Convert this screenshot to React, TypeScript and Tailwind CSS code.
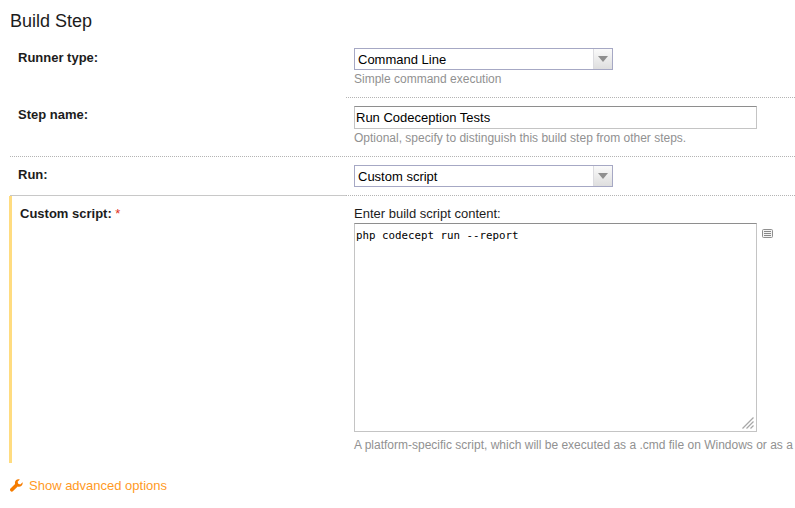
import type { ReactNode } from 'react';

const font = "font-['Liberation_Sans',Arial,sans-serif]";

function FakeSelect({ value }: { value: string }) {
  return (
    <div className="flex h-[22px] w-[259px] border border-[#a6a8c4] bg-white">
      <div className="flex-1 pl-[3px] text-[13px] leading-[21px] text-black">{value}</div>
      <div className="flex w-[19px] items-center justify-center border-l border-[#dcdce0] bg-gradient-to-b from-[#fafafa] to-[#dedede]">
        <svg width="10" height="6" viewBox="0 0 10 6">
          <path d="M0 0h10L5 6z" fill="#8f8f8f" />
        </svg>
      </div>
    </div>
  );
}

function Note({ children }: { children: ReactNode }) {
  return <div className="whitespace-nowrap text-[12px] leading-[14px] text-[#919191]">{children}</div>;
}

function Label({ children }: { children: ReactNode }) {
  return <div className="text-[13px] font-bold leading-[15px] text-[#1c1c1c]">{children}</div>;
}

export default function App() {
  return (
    <div className={`${font} h-[508px] w-[795px] overflow-hidden bg-white`}>
      <h1 className="h-10 pl-[10px] pt-[10px] text-[18px] font-normal leading-[22px] text-[#1c1c1c]">Build Step</h1>

      <div className="ml-[10px]">
        {/* Runner type */}
        <div className="flex h-[58px]">
          <div className="w-[336px] pl-2 pt-[10px]">
            <Label>Runner type:</Label>
          </div>
          <div className="flex-1 border-b border-dotted border-[#b4b4b4] pl-2 pt-2">
            <FakeSelect value="Command Line" />
            <div className="mt-[2px]">
              <Note>Simple command execution</Note>
            </div>
          </div>
        </div>

        {/* Step name */}
        <div className="flex h-[59px] border-b border-dotted border-[#b4b4b4]">
          <div className="w-[336px] pl-2 pt-[9px]">
            <Label>Step name:</Label>
          </div>
          <div className="flex-1 pl-2 pt-2">
            <input
              readOnly
              value="Run Codeception Tests"
              className="block h-[23px] w-[403px] border border-[#c4c4c4] border-t-[#8e8e8e] pl-[1px] text-[13px] text-black outline-none"
            />
            <div className="mt-[2px]">
              <Note>Optional, specify to distinguish this build step from other steps.</Note>
            </div>
          </div>
        </div>

        {/* Run */}
        <div className="flex h-[39px]">
          <div className="w-[336px] border-b border-[#c8c8c8] pl-2 pt-[10px]">
            <Label>Run:</Label>
          </div>
          <div className="flex-1 border-b border-dotted border-[#b4b4b4] pl-2 pt-2">
            <FakeSelect value="Custom script" />
          </div>
        </div>

        {/* Custom script */}
        <div className="-ml-px flex h-[267px] overflow-hidden">
          <div className="w-[337px] border-l-[3px] border-[#ffdc80] pl-2 pt-[10px]">
            <Label>
              Custom script: <span className="font-normal text-[#e0301e]">*</span>
            </Label>
          </div>
          <div className="min-w-0 flex-1 pl-2 pt-[10px]">
            <div className="text-[13px] leading-[15px] text-[#1c1c1c]">Enter build script content:</div>
            <div className="mt-[2px] flex items-start">
              <div className="relative shrink-0">
                <textarea
                  readOnly
                  defaultValue="php codecept run --report"
                  className="block h-[209px] w-[403px] resize-none border border-[#c4c4c4] border-t-[#8e8e8e] px-[1px] pb-[4px] pt-[5px] font-['DejaVu_Sans_Mono',monospace] text-[10.8px] leading-[13px] text-black outline-none"
                />
                {/* resize grip */}
                <svg width="12" height="12" viewBox="0 0 12 12" className="absolute bottom-[3px] right-[3px]">
                  <path d="M0.5 11.5 11.5 0.5M4.5 11.5 11.5 4.5M8.5 11.5 11.5 8.5" stroke="#a8a8a8" strokeWidth="1.3" />
                </svg>
              </div>
              <svg width="11" height="10" viewBox="0 0 11 10" className="ml-[5px] mt-[6px] shrink-0">
                <rect x="0.5" y="0.5" width="10" height="8" rx="1" fill="#f4f4f4" stroke="#8f8f8f" />
                <path d="M2 2.5h7M2 4.5h7M2 6.5h7" stroke="#888" />
              </svg>
            </div>
            <div className="mt-[6px]">
              <Note>A platform-specific script, which will be executed as a .cmd file on Windows or as a</Note>
            </div>
          </div>
        </div>

        {/* Advanced options */}
        <div className="mt-[15px] flex items-center">
          <svg width="13" height="13" viewBox="0 0 13 13" className="shrink-0">
            <path
              d="M12.6 3.2 10.3 5.4 8.2 4.8 7.6 2.7 9.8.4C8.4-.1 6.9.2 5.9 1.2 4.9 2.2 4.7 3.7 5.1 4.9L.5 9.5c-.7.7-.7 1.9 0 2.6.7.7 1.9.7 2.6 0l4.6-4.6c1.3.5 2.7.2 3.8-.8 1-1 1.4-2.4 1.1-3.5z"
              fill="#f57c00"
            />
          </svg>
          <span className="ml-[6px] text-[13px] leading-[15px] text-[#ff9a1f]">Show advanced options</span>
        </div>
      </div>
    </div>
  );
}
